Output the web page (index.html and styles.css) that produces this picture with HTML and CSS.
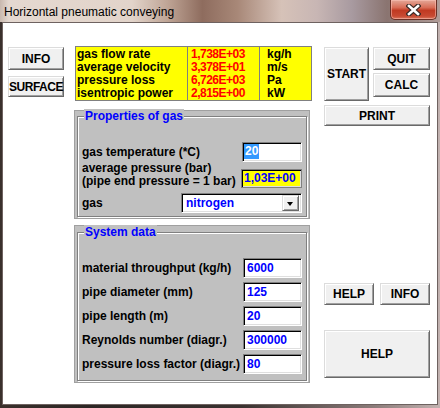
FILE: index.html
```html
<!DOCTYPE html>
<html>
<head>
<meta charset="utf-8">
<meta name="viewport" content="width=device-width, initial-scale=1.0">
<title>Horizontal pneumatic conveying</title>

<link rel="stylesheet" href="styles.css">
</head>

<body>

  <div class="window">
    <div class="titlebar">
      <span class="title">Horizontal pneumatic conveying</span>
      <button class="close" aria-label="Close">
        <svg width="15" height="12" viewBox="0 0 15 12">
          <path d="M3 2 L12 10 M12 2 L3 10" stroke="#3b2a26" stroke-width="5" stroke-linecap="square"/>
          <path d="M3 2 L12 10 M12 2 L3 10" stroke="#ffffff" stroke-width="2.6" stroke-linecap="square"/>
        </svg>
      </button>
    </div>

    <div class="client">

      <div class="col-left">
        <button class="btn btn-info">INFO</button>
        <button class="btn btn-surface">SURFACE</button>
      </div>

      <div class="col-mid">
        <table class="results">
          <tr><td class="t-label">gas flow rate</td><td class="t-num">1,738E+03</td><td class="t-unit">kg/h</td></tr>
          <tr><td class="t-label">average velocity</td><td class="t-num">3,378E+01</td><td class="t-unit">m/s</td></tr>
          <tr><td class="t-label">pressure loss</td><td class="t-num">6,726E+03</td><td class="t-unit">Pa</td></tr>
          <tr><td class="t-label">isentropic power</td><td class="t-num">2,815E+00</td><td class="t-unit">kW</td></tr>
        </table>

        <div class="panel panel-gas">
          <div class="group group-gas">
            <div class="group-title">Properties of gas</div>
            <div class="row row-first">
              <span>gas temperature (*C)</span>
              <div class="field field-sel"><span class="sel">20</span></div>
            </div>
            <div class="row row-tall">
              <span>average pressure (bar)<br>(pipe end pressure = 1 bar)</span>
              <div class="field field-yellow">1,03E+00</div>
            </div>
            <div class="row row-gas">
              <span>gas</span>
              <div class="combo">
                <span>nitrogen</span>
                <span class="combo-arrow"></span>
              </div>
            </div>
          </div>
        </div>

        <div class="panel panel-system">
          <div class="group group-system">
            <div class="group-title">System data</div>
            <div class="row row-first">
              <span>material throughput (kg/h)</span>
              <div class="field field-sys">6000</div>
            </div>
            <div class="row row-next">
              <span>pipe diameter (mm)</span>
              <div class="field field-sys">125</div>
            </div>
            <div class="row row-next">
              <span>pipe length (m)</span>
              <div class="field field-sys">20</div>
            </div>
            <div class="row row-next">
              <span>Reynolds number (diagr.)</span>
              <div class="field field-sys">300000</div>
            </div>
            <div class="row row-next">
              <span>pressure loss factor (diagr.)</span>
              <div class="field field-sys">80</div>
            </div>
          </div>
        </div>
      </div>

      <div class="col-right">
        <div class="run">
          <button class="btn btn-start">START</button>
          <div class="stack">
            <button class="btn btn-quit">QUIT</button>
            <button class="btn btn-calc">CALC</button>
          </div>
        </div>
        <button class="btn btn-print">PRINT</button>
        <div class="help-row">
          <button class="btn btn-small">HELP</button>
          <button class="btn btn-small">INFO</button>
        </div>
        <button class="btn btn-big">HELP</button>
      </div>

    </div>
  </div>

</body>
</html>
```

FILE: styles.css
```css
* {
  box-sizing: border-box;
}

html, body {
  margin: 0;
  padding: 0;
  overflow: hidden;
}

body {
  width: 440px;
  height: 408px;
  font-family: "Liberation Sans", Arial, sans-serif;
}

.window {
  width: 440px;
  height: 408px;
  display: flex;
  flex-direction: column;
  padding: 0 2px 3px;
  background: linear-gradient(to right, #3a302c 0, #2c2624 20%, #3a3230 55%, #8c7c7a 85%, #c2b2b0 100%);
}

.titlebar {
  height: 22px;
  margin: 0 -2px;
  display: flex;
  justify-content: space-between;
  align-items: flex-start;
  background: linear-gradient(to right, #c8b8ae 0, #e4d8d0 2%, #e2d4ca 30%, #bfa596 38%, #8e6c5e 46%, #a88878 54%, #d6c2b8 64%, #c8b6b4 72%, #a89aa0 80%, #8a7470 88%, #b09c98 100%);
}

.title {
  font-size: 12px;
  line-height: 15px;
  padding: 5px 0 0 4px;
  color: #000;
}

.close {
  width: 47px;
  height: 20px;
  margin-right: 3px;
  padding: 0;
  display: flex;
  align-items: center;
  justify-content: center;
  border: 1px solid #6a3026;
  border-top: none;
  border-radius: 0 0 5px 5px;
  background: linear-gradient(#e4a898 0, #d86c56 40%, #c03a22 55%, #c84a32 85%, #d8785e 100%);
  box-shadow: inset 0 0 0 1px rgba(255, 200, 190, 0.5);
}

.client {
  flex: 1;
  display: flex;
  align-items: flex-start;
  padding: 23px 0 0 5px;
  background: #fff;
  border: 1px solid #6e6260;
}

/* buttons */

.btn {
  padding: 0;
  font-family: "Liberation Sans", Arial, sans-serif;
  font-weight: bold;
  font-size: 12px;
  color: #000;
  background: #f0f0f0;
  border: 1px solid;
  border-color: #dcdcdc #696969 #696969 #dcdcdc;
  box-shadow: inset 1px 1px #fff, inset -1px -1px #a0a0a0;
}

.col-left {
  width: 56px;
  margin-top: 1px;
  display: flex;
  flex-direction: column;
  gap: 6px;
}

.btn-info {
  height: 23px;
}

.btn-surface {
  height: 21px;
  letter-spacing: -0.5px;
}

.col-right {
  width: 106px;
  margin: 1px 0 0 13px;
  display: flex;
  flex-direction: column;
}

.run {
  height: 54px;
  display: flex;
  gap: 4px;
}

.btn-start {
  width: 45px;
  height: 54px;
}

.stack {
  width: 57px;
  display: flex;
  flex-direction: column;
  justify-content: space-between;
  height: 50px;
}

.btn-quit {
  height: 23px;
}

.btn-calc {
  height: 24px;
}

.btn-print {
  height: 21px;
  margin-top: 4px;
}

.help-row {
  display: flex;
  justify-content: space-between;
  margin-top: 157px;
}

.btn-small {
  width: 50px;
  height: 22px;
}

.btn-big {
  height: 48px;
  margin-top: 25px;
}

/* middle column */

.col-mid {
  width: 237px;
  margin-left: 10px;
}

.results {
  width: 237px;
  margin-left: 1px;
  border-collapse: separate;
  border-spacing: 0;
  border: 1px solid #808080;
  background: #ffff00;
  font-weight: bold;
  font-size: 12px;
  line-height: 13px;
}

.results td {
  padding: 0;
  white-space: nowrap;
}

.results tr:first-child td {
  padding-top: 1px;
}

.t-label {
  width: 111px;
  padding-left: 1px !important;
  color: #000;
}

.t-num {
  width: 72px;
  padding-left: 3px !important;
  border-left: 1px solid #808080;
  color: #ff0000;
  letter-spacing: -0.5px;
}

.t-unit {
  padding-left: 7px !important;
  border-left: 1px solid #808080;
  color: #000;
}

.panel {
  width: 236px;
  padding: 0 2px;
  background: #c0c0c0;
  border: 1px solid #a0a0a0;
}

.panel-gas {
  margin-top: 9px;
}

.panel-system {
  margin-top: 6px;
}

.group {
  padding: 0 4px;
  border: 1px solid #808080;
  box-shadow: inset 1px 1px #fff, 1px 1px #fff;
  font-weight: bold;
  font-size: 12px;
  color: #000;
}

.group-gas {
  margin: 5px 0 1px;
  padding-bottom: 3px;
}

.group-system {
  margin: 6px 0 1px;
  padding-bottom: 6px;
}

.group-title {
  display: table;
  margin: -8px 0 0 2px;
  padding: 0 1px;
  line-height: 14px;
  color: #0000ff;
  background: #c0c0c0;
}

.row {
  height: 20px;
  display: flex;
  align-items: center;
  justify-content: space-between;
  line-height: 13px;
  white-space: nowrap;
}

.row-first {
  margin-top: 19px;
}

.row-next {
  margin-top: 4px;
}

.row-tall {
  height: 26px;
  align-items: flex-end;
}

.row-gas {
  margin-top: 5px;
}

.field {
  width: 60px;
  height: 20px;
  padding-left: 3px;
  line-height: 18px;
  color: #0000ff;
  background: #fff;
  border: 1px solid;
  border-color: #808080 #fff #fff #808080;
  box-shadow: inset 1px 1px #000, inset -1px -1px #dfdfdf;
}

.field-sel {
  padding-left: 1px;
  padding-top: 1px;
}

.sel {
  display: inline-block;
  padding: 0 1px;
  line-height: 15px;
  color: #fff;
  background: #3399ff;
  vertical-align: top;
}

.field-yellow {
  width: 61px;
  height: 19px;
  padding-left: 2px;
  line-height: 17px;
  background: #ffff00;
  border-color: #808080;
}

.field-sys {
  width: 59px;
}

.combo {
  width: 121px;
  height: 20px;
  display: flex;
  align-items: center;
  justify-content: space-between;
  padding: 2px 2px 2px 4px;
  color: #0000ff;
  background: #fff;
  border: 1px solid;
  border-color: #808080 #fff #fff #808080;
  box-shadow: inset 1px 1px #000, inset -1px -1px #dfdfdf;
}

.combo-arrow {
  width: 17px;
  height: 16px;
  position: relative;
  background: #f0f0f0;
  border: 1px solid;
  border-color: #dcdcdc #696969 #696969 #dcdcdc;
  box-shadow: inset 1px 1px #fff, inset -1px -1px #a0a0a0;
}

.combo-arrow::after {
  content: "";
  position: absolute;
  left: 4px;
  top: 6px;
  border-left: 3.5px solid transparent;
  border-right: 3.5px solid transparent;
  border-top: 4px solid #000;
}
```
